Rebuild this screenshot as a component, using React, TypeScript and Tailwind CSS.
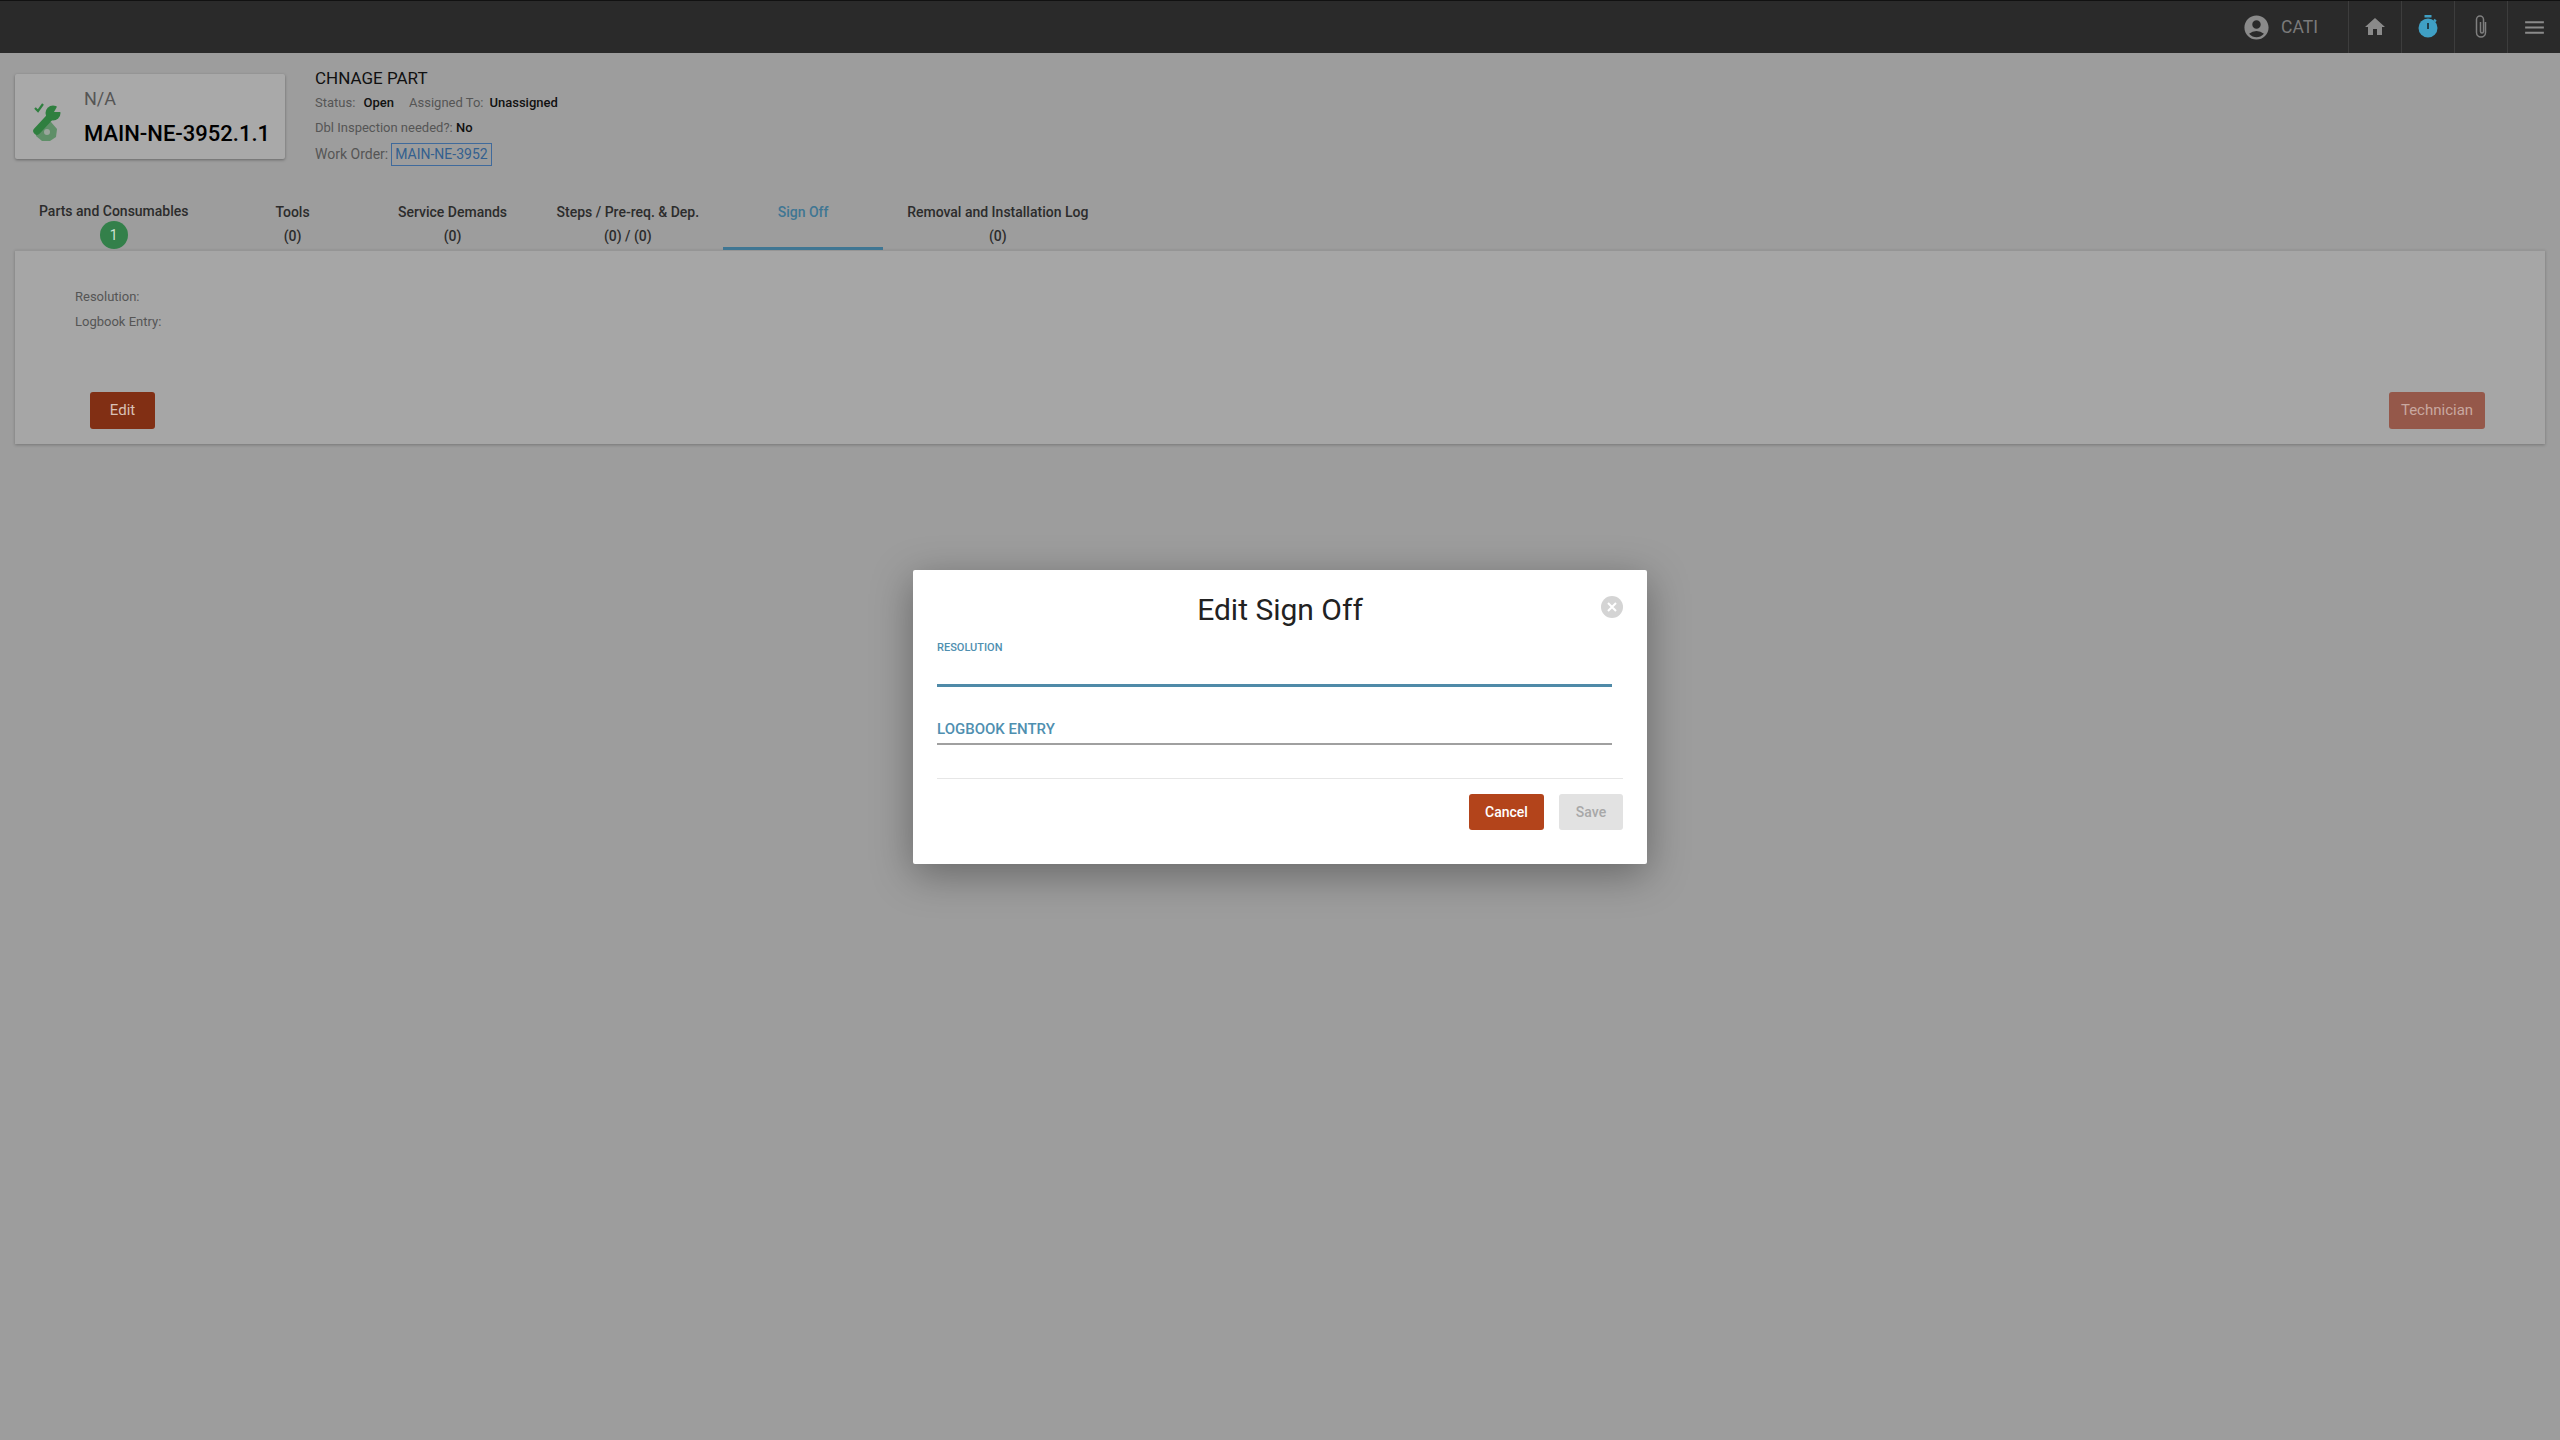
import { MdAccountCircle, MdHome, MdMenu } from "react-icons/md";

const tabs = [
	{ label: "Parts and Consumables", count: "badge" },
	{ label: "Tools", count: "(0)" },
	{ label: "Service Demands", count: "(0)" },
	{ label: "Steps / Pre-req. & Dep.", count: "(0) / (0)" },
	{ label: "Sign Off", count: "", active: true },
	{ label: "Removal and Installation Log", count: "(0)" },
];

const TaskIcon = () => (
	<svg width="28" height="38" viewBox="0 0 28 38" className="shrink-0 mt-[10px]">
		{/* nut */}
		<path d="M9 19l9 0 6 7 -1 8-6 4-8 0-6-5 0-7z" fill="#5f8f68" />
		<circle cx="14" cy="29" r="3" fill="#9aa59c" />
		{/* wrench */}
		<path d="M4 28L17 14" stroke="#2f7f3f" strokeWidth="7.500" strokeLinecap="round" />
		<circle cx="20" cy="10" r="7.500" fill="#2f7f3f" />
		<path d="M21 9L26 0L29 9z" fill="#a9a9a9" />
		{/* check mark */}
		<path d="M2 5l3 3 5-7" fill="none" stroke="#2f7f3f" strokeWidth="2.200" />
	</svg>
);

const TimerIcon = () => (
	<svg width="20" height="24" viewBox="0 0 20 24">
		<rect x="6.500" y="0" width="7" height="2.500" fill="#3f9fc4" />
		<path d="M16 4.500l2 2" stroke="#3f9fc4" strokeWidth="2" />
		<circle cx="10" cy="13" r="9.500" fill="#3f9fc4" />
		<rect x="9" y="8" width="2" height="6" fill="#1f3d4a" />
	</svg>
);

const ClipIcon = () => (
	<svg width="14" height="24" viewBox="0 0 14 24" fill="none" stroke="#7f7f7f" strokeWidth="1.500">
		<path d="M11.500 7v10.500a4.500 4.500 0 0 1-9 0V4.500a3.500 3.500 0 0 1 7 0v12a1.500 1.500 0 0 1-3 0V7" />
	</svg>
);

const HeaderCell = ({ children }: { children: React.ReactNode }) => (
	<div className="w-[53px] h-full flex items-center justify-center border-l border-[#3d3d3d]">{children}</div>
);

const App: React.FC = () => {
	return (
		<div className="relative h-screen overflow-hidden bg-[#9d9d9d] font-['Roboto',sans-serif]">
			{/* Top bar */}
			<header className="h-[53px] bg-[#2a2a2a] border-t border-[#111] flex justify-end">
				<div className="flex items-center gap-[10px] pr-[30px] text-[#7a7a7a]">
					<MdAccountCircle size={29} className="text-[#8a8a8a]" />
					<span className="text-[17.500px]">CATI</span>
				</div>
				<HeaderCell>
					<MdHome size={24} className="text-[#8a8a8a]" />
				</HeaderCell>
				<HeaderCell>
					<TimerIcon />
				</HeaderCell>
				<HeaderCell>
					<ClipIcon />
				</HeaderCell>
				<HeaderCell>
					<MdMenu size={25} className="text-[#8a8a8a]" />
				</HeaderCell>
			</header>

			{/* Work item summary */}
			<div className="h-[85px] mt-[21px] flex items-start pl-[15px] gap-[30px]">
				<div className="w-[270px] h-[85px] bg-[#a9a9a9] rounded-[2px] shadow-[0_1px_3px_rgba(0,0,0,0.35)] flex items-center pl-[18px] gap-[23px]">
					<TaskIcon />
					<div className="mt-[5px]">
						<div className="text-[18px] leading-[20px] text-[#555]">N/A</div>
						<div className="mt-[10px] text-[22px] leading-[30px] font-medium text-black">MAIN-NE-3952.1.1</div>
					</div>
				</div>
				<div className="-mt-[6px] text-[13px] text-[#555]">
					<div className="text-[17px] leading-[20px] text-[#111]">CHNAGE PART</div>
					<div className="mt-[7px] leading-[16px]">
						Status: <b className="ml-[5px] font-medium text-[#111]">Open</b>
						<span className="ml-[15px]">Assigned To:</span>
						<b className="ml-[6px] font-medium text-[#111]">Unassigned</b>
					</div>
					<div className="mt-[9px] leading-[16px]">
						Dbl Inspection needed?: <b className="font-medium text-[#111]">No</b>
					</div>
					<div className="mt-[7px] flex items-center gap-[3px] text-[14px]">
						<span>Work Order:</span>
						<span className="h-[23px] px-[3px] flex items-center border border-[#3f6a9c] text-[#33608f]">MAIN-NE-3952</span>
					</div>
				</div>
			</div>

			{/* Tabs */}
			<div className="flex ml-[15px] mt-[39px] h-[52px] text-[14px] font-medium text-[#2c2c2c]">
				{tabs.map((tab) => (
					<div
						key={tab.label}
						className={
							tab.active
								? "min-w-[160px] px-6 text-center border-b-[3px] border-[#3f7693] text-[#3f7693] pt-[5px]"
								: "min-w-[160px] px-6 text-center pt-[5px]"
						}
					>
						<div className={tab.count === "badge" ? "-mt-[1px] leading-[18px] whitespace-nowrap" : "leading-[18px] whitespace-nowrap"}>
							{tab.label}
						</div>
						{tab.count === "badge" ? (
							<div className="mx-auto mt-[1px] w-[28px] h-[28px] rounded-full bg-[#33804a] flex items-center justify-center text-[#cfe3d3] font-normal">
								1
							</div>
						) : (
							<div className="mt-[7px] leading-[16px]">{tab.count}</div>
						)}
					</div>
				))}
			</div>

			{/* Sign off panel */}
			<div className="mx-[15px] h-[194px] bg-[#a6a6a6] border-t border-[#959595] shadow-[0_1px_3px_rgba(0,0,0,0.25)] flex flex-col">
				<div className="pl-[60px] pt-[38px] text-[13px] text-[#555]">
					<div className="leading-[16px]">Resolution:</div>
					<div className="mt-[9px] leading-[16px]">Logbook Entry:</div>
				</div>
				<div className="mt-auto mb-[15px] flex justify-between pl-[75px] pr-[60px]">
					<button className="w-[65px] h-[37px] rounded-[3px] bg-[#812f14] text-[15px] text-[#d9c0b6]">Edit</button>
					<button className="w-[96px] h-[37px] rounded-[3px] bg-[#95584a] text-[15px] text-[#c9a8a0]">Technician</button>
				</div>
			</div>

			{/* Edit dialog */}
			<div className="absolute inset-0 flex items-center justify-center">
				<div className="relative -mt-[6px] w-[734px] h-[294px] bg-white rounded-[2px] shadow-[0_10px_40px_rgba(0,0,0,0.35)] px-[24px]">
					<h2 className="pt-[18px] text-center text-[30px] leading-[44px] text-[#222]">Edit Sign Off</h2>
					<button className="absolute top-[26px] right-[24px] w-[22px] h-[22px] rounded-full bg-[#d4d4d4] flex items-center justify-center">
						<svg width="10" height="10" viewBox="0 0 10 10" stroke="#fff" strokeWidth="2">
							<path d="M1 1l8 8M9 1l-8 8" />
						</svg>
					</button>
					<div className="mr-[11px]">
						<label className="block mt-[9px] text-[11px] leading-[14px] font-medium text-[#4f8fb0]">RESOLUTION</label>
						<div className="mt-[29px] h-[3px] bg-[#4f8aa8]" />
						<label className="block mt-[33px] text-[15px] leading-[18px] font-medium text-[#4f8fb0]">LOGBOOK ENTRY</label>
						<div className="mt-[5px] h-[2px] bg-[#a0a0a0]" />
					</div>
					<div className="mt-[33px] pt-[15px] border-t border-[#e6e6e6] flex justify-end gap-[15px]">
						<button className="w-[75px] h-[36px] rounded-[3px] bg-[#b3441b] text-[14px] font-medium text-white">Cancel</button>
						<button className="w-[64px] h-[36px] rounded-[3px] bg-[#e2e2e2] text-[14px] font-medium text-[#a8a8a8]">Save</button>
					</div>
				</div>
			</div>
		</div>
	);
};

export default App;
